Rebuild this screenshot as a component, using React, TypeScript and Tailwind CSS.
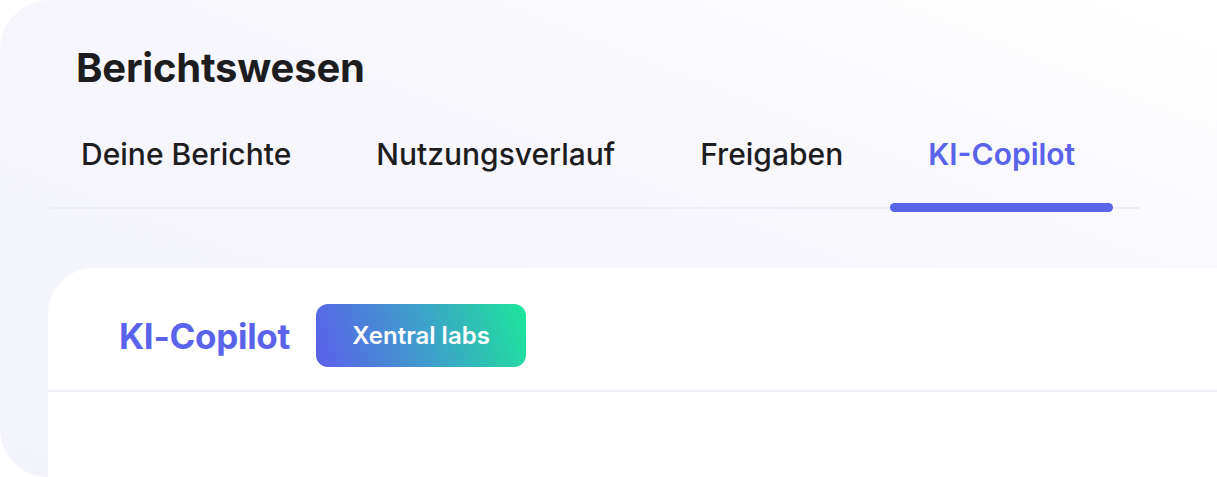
import React, { useState } from 'react';

const tabs = ['Deine Berichte', 'Nutzungsverlauf', 'Freigaben', 'KI-Copilot'];

const App = () => {
    const [active, setActive] = useState('KI-Copilot');

    return (
        <div className="w-[1217px] h-[477px] bg-white overflow-hidden font-['Inter','Liberation_Sans',sans-serif]">
            {/* Hintergrund-Panel */}
            <div className="h-[477px] rounded-tl-[50px] rounded-bl-[48px] overflow-hidden bg-[linear-gradient(to_top_right,#f3f3fb_0%,#f6f6fc_55%,#ffffff_100%)] flex flex-col">
                <h1 className="pl-[76px] pt-[42px] text-[40px] leading-[52px] font-bold text-[#1d1d1f] tracking-[-0.2px]">
                    Berichtswesen
                </h1>

                {/* Tabs */}
                <div className="ml-[50px] w-[1090px] mt-[42px] border-b-2 border-[#ececf8]">
                    <div className="flex gap-[9px] -ml-[7px]">
                        {tabs.map((tab) => (
                            <button
                                key={tab}
                                onClick={() => setActive(tab)}
                                className={`relative px-[38px] pb-[35px] text-[30px] leading-[36px] ${active === tab
                                        ? 'text-[#5a63ea] font-semibold'
                                        : 'text-[#1d1d1f] font-medium'
                                    }`}
                            >
                                {tab}
                                {active === tab && (
                                    <span className="absolute left-0 right-0 -bottom-[5px] h-[9px] rounded-full bg-[#5a63ea]" />
                                )}
                            </button>
                        ))}
                    </div>
                </div>

                {/* Inhalt-Karte */}
                <div className="ml-[48px] mt-[59px] flex-1 bg-white rounded-tl-[46px]">
                    <div className="flex items-center gap-[26px] pl-[71px] pt-[36px] pb-[23px] border-b-2 border-[#f0f0fa]">
                        <h2 className="text-[35px] leading-[44px] font-bold text-[#5a63ea] tracking-[-0.3px]">KI-Copilot</h2>
                        <span className="flex items-center justify-center w-[210px] h-[63px] rounded-[12px] bg-[linear-gradient(72deg,#5b5fe9_0%,#3f9dcc_50%,#1de69a_100%)] text-white text-[24px] font-semibold">
                            Xentral labs
                        </span>
                    </div>
                </div>
            </div>
        </div>
    );
};

export default App;
